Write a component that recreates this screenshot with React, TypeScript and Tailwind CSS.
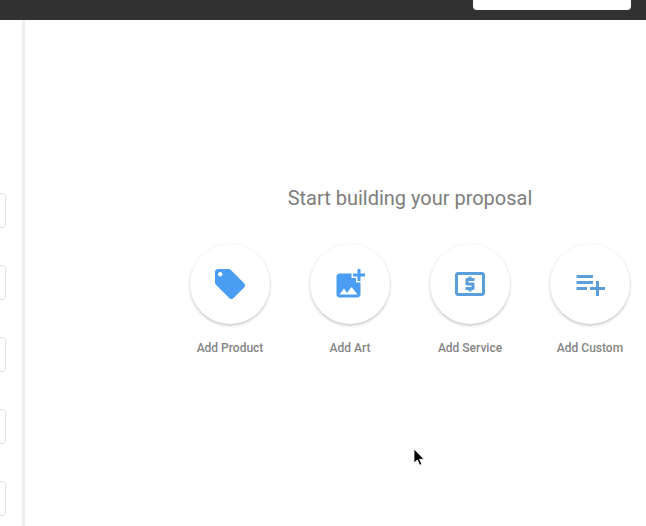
import { MdAddPhotoAlternate, MdLocalAtm, MdLocalOffer, MdPlaylistAdd } from "react-icons/md";

const actions = [
  { label: "Add Product", Icon: MdLocalOffer, color: "text-[#4a9df2]" },
  { label: "Add Art", Icon: MdAddPhotoAlternate, color: "text-[#4a9df2]" },
  { label: "Add Service", Icon: MdLocalAtm, color: "text-[#5a9fdb]" },
  { label: "Add Custom", Icon: MdPlaylistAdd, color: "text-[#5a9fdb]" },
];

export default function App() {
  return (
    <div className="relative flex h-[526px] w-[646px] flex-col overflow-hidden bg-white font-['Roboto',sans-serif]">
      {/* Top bar */}
      <div className="flex h-5 shrink-0 justify-end bg-[#323232] pr-[15px]">
        <div className="h-2.5 w-[158px] rounded-b-sm bg-white" />
      </div>

      <div className="flex min-h-0 flex-1">
        {/* Sidebar, cut off on the left */}
        <div className="flex w-[25px] shrink-0 flex-col gap-[37px] border-r-[3px] border-[#eeeeee] pt-[173px]">
          {[0, 1, 2, 3, 4].map((i) => (
            <div
              key={i}
              className="h-[35px] w-1.5 shrink-0 rounded-r-sm border border-l-0 border-[#e3e3e3] bg-white"
            />
          ))}
        </div>

        {/* Empty state */}
        <div className="ml-[145px] flex w-[480px] shrink-0 flex-col items-center pt-[165px]">
          <h1 className="text-xl leading-[26px] tracking-[-0.01px] text-[#7d7d7d]">
            Start building your proposal
          </h1>
          <div className="mt-[33px] flex">
            {actions.map(({ label, Icon, color }) => (
              <div key={label} className="flex w-[120px] flex-col items-center">
                <button className="flex size-20 items-center justify-center rounded-full bg-white shadow-[0_2px_3px_rgba(0,0,0,0.18),0_0_3px_rgba(0,0,0,0.07)]">
                  <Icon className={`size-9 ${color}`} />
                </button>
                <span className="mt-4 text-xs leading-4 font-medium text-[#858585]">{label}</span>
              </div>
            ))}
          </div>
        </div>
      </div>

      {/* Mouse pointer */}
      <svg className="absolute top-[448px] left-[412px]" width="14" height="20" viewBox="0 0 14 20">
        <path
          d="M2 1v14l3.4-3 2.2 5.2 2.2-1-2.2-5H12z"
          fill="#000"
          stroke="#fff"
          strokeWidth="0.8"
        />
      </svg>
    </div>
  );
}
